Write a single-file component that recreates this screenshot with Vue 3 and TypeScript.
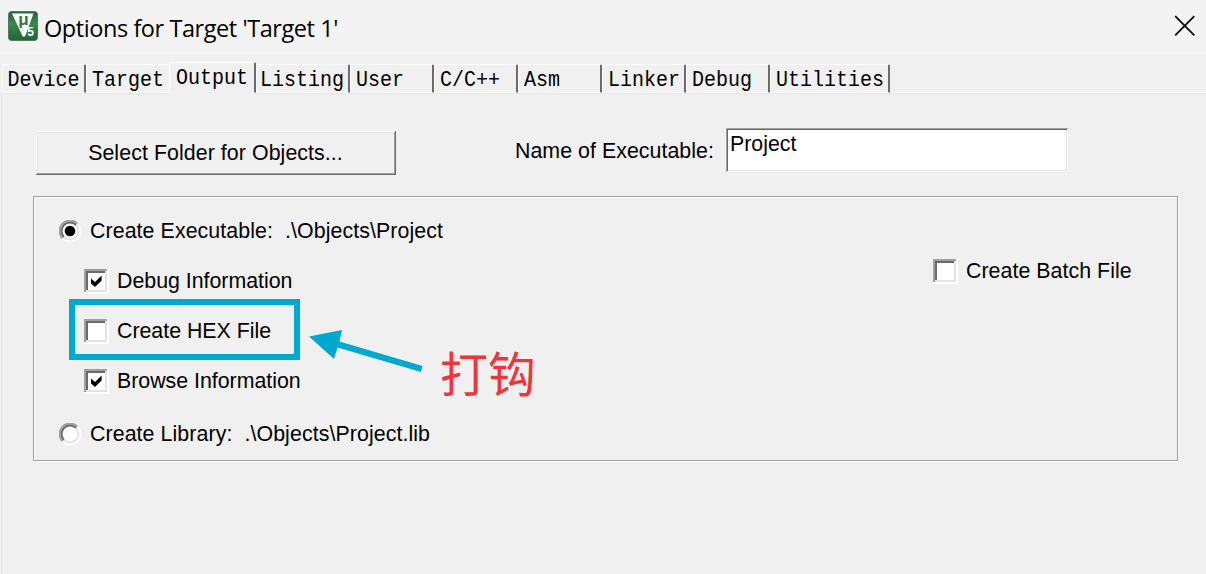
<script setup lang="ts">
import { ref } from 'vue'

interface Tab {
  label: string
  width: number
  pad: number
}

const tabs: Tab[] = [
  { label: 'Device', width: 84, pad: 5 },
  { label: 'Target', width: 83, pad: 5 },
  { label: 'Output', width: 87, pad: 6 },
  { label: 'Listing', width: 94, pad: 3 },
  { label: 'User', width: 84, pad: 5 },
  { label: 'C/C++', width: 84, pad: 5 },
  { label: 'Asm', width: 84, pad: 5 },
  { label: 'Linker', width: 84, pad: 5 },
  { label: 'Debug', width: 84, pad: 5 },
  { label: 'Utilities', width: 120, pad: 5 },
]
const active = ref('Output')
const mode = ref<'exe' | 'lib'>('exe')
const options = ref([
  { label: 'Debug Information', checked: true, marked: false },
  { label: 'Create HEX File', checked: false, marked: true },
  { label: 'Browse Information', checked: true, marked: false },
])
</script>

<template>
  <div class="dialog">
    <header class="titlebar">
      <svg class="logo" width="30" height="30" viewBox="0 0 30 30">
        <defs>
          <linearGradient id="logo-fill" x1="0" y1="0" x2="0" y2="1">
            <stop offset="0" stop-color="#286437" />
            <stop offset=".45" stop-color="#38894a" />
            <stop offset="1" stop-color="#246036" />
          </linearGradient>
        </defs>
        <rect x=".5" y=".5" width="29" height="29" rx="3" fill="url(#logo-fill)" stroke="#4f7b5a" />
        <path d="M4 2.5H25.5L17 25.5H14.8Z" fill="#fff" />
        <text x="10.2" y="13.5" class="mu">μ</text>
        <text x="19.2" y="25.3" class="five">5</text>
      </svg>
      <h1 class="title">Options for Target 'Target 1'</h1>
      <svg class="close" width="22" height="22" viewBox="0 0 22 22">
        <path d="M1.2 1.2L20.3 20.3M20.3 1.2L1.2 20.3" stroke="#111" stroke-width="1.9" />
      </svg>
    </header>

    <nav class="tabs">
      <div
        v-for="t in tabs"
        :key="t.label"
        class="tab"
        :class="{ active: t.label === active }"
        :style="{ width: t.width + 'px', paddingLeft: t.pad + 'px' }"
        @click="active = t.label"
      >
        <span>{{ t.label }}</span>
      </div>
      <div class="rest"></div>
    </nav>

    <main class="page">
      <div class="top">
        <button class="folder">Select Folder for Objects...</button>
        <span class="name-label">Name of Executable:</span>
        <div class="field">Project</div>
      </div>

      <section class="group">
        <div class="left">
          <div class="row radio-row" @click="mode = 'exe'">
            <svg class="radio" width="22" height="22" viewBox="0 0 22 22">
              <circle cx="11" cy="11" r="9.5" fill="#fff" />
              <path d="M3.6 18.4A10 10 0 0 1 18.4 3.6" class="r1" />
              <path d="M18.4 3.6A10 10 0 0 1 3.6 18.4" class="r2" />
              <path d="M5 17A8.2 8.2 0 0 1 17 5" class="r3" />
              <path d="M17 5A8.2 8.2 0 0 1 5 17" class="r4" />
              <circle v-if="mode === 'exe'" cx="11" cy="11" r="5.3" fill="#000" />
            </svg>
            <span>Create Executable:&nbsp; .\Objects\Project</span>
          </div>
          <div v-for="o in options" :key="o.label" class="row check-row" :class="{ marked: o.marked }" @click="o.checked = !o.checked">
            <i class="box">
              <svg v-if="o.checked" width="13" height="13" viewBox="0 0 13 13">
                <path d="M1 3.6L5 7L11.6 .6V5.4L5 12L1 8.4Z" fill="#000" />
              </svg>
            </i>
            <span>{{ o.label }}</span>
          </div>
          <div class="row radio-row library" @click="mode = 'lib'">
            <svg class="radio" width="22" height="22" viewBox="0 0 22 22">
              <circle cx="11" cy="11" r="9.5" fill="#fff" />
              <path d="M3.6 18.4A10 10 0 0 1 18.4 3.6" class="r1" />
              <path d="M18.4 3.6A10 10 0 0 1 3.6 18.4" class="r2" />
              <path d="M5 17A8.2 8.2 0 0 1 17 5" class="r3" />
              <path d="M17 5A8.2 8.2 0 0 1 5 17" class="r4" />
              <circle v-if="mode === 'lib'" cx="11" cy="11" r="5.3" fill="#000" />
            </svg>
            <span>Create Library:&nbsp; .\Objects\Project.lib</span>
          </div>
        </div>
        <div class="row batch">
          <i class="box"></i>
          <span>Create Batch File</span>
        </div>
      </section>
    </main>

    <svg class="arrow" width="116" height="46" viewBox="0 0 116 46">
      <path d="M1 8.5L34 2L31.5 13.5L114.5 38L113 44L29.5 19.5L26 31Z" fill="#00aacf" />
    </svg>
    <div class="note">打钩</div>
  </div>
</template>

<style>
body {
  margin: 0;
  background: #f0f0f0;
}
</style>

<style scoped>
.dialog {
  position: relative;
  width: 1206px;
  height: 574px;
  overflow: hidden;
  box-sizing: border-box;
  background: #f0f0f0;
  color: #000;
  font-family: 'Liberation Sans', Arial, sans-serif;
  font-size: 21.33px;
  line-height: 26px;
}
.titlebar {
  display: flex;
  height: 55px;
  background: #f3f3f3;
  box-sizing: border-box;
  padding: 11px 10px 0 8px;
}
.logo {
  flex: none;
}
.mu {
  font: bold 17px 'Liberation Sans', sans-serif;
  fill: #31783f;
}
.five {
  font: bold 12px 'Liberation Sans', sans-serif;
  fill: #fff;
}
.title {
  flex: 1;
  margin: 0 0 0 6px;
  font: 400 23.5px/34px 'Open Sans', 'Noto Sans', sans-serif;
  letter-spacing: -0.43px;
  white-space: nowrap;
}
.close {
  flex: none;
  margin-top: 4px;
}
.tabs {
  display: flex;
  align-items: flex-end;
  height: 38px;
  padding-left: 2px;
}
.tab {
  flex: none;
  box-sizing: border-box;
  height: 29px;
  border: 1px solid #fff;
  border-right: 2px solid #6b6b6b;
  border-bottom: 1px solid #fff;
  border-radius: 2px 2px 0 0;
  font: 20px/30px 'Liberation Mono', monospace;
  white-space: pre;
}
.tab:not(.active),
.rest {
  box-shadow: 0 1px #e3e3e3;
}
.tab span {
  display: inline-block;
  transform: scaleY(1.14);
}
.tab:first-child span {
  margin-left: -0.5px;
}
.tab:nth-child(2) {
  border-right: 0;
}
.tab.active {
  height: 31px;
  border-bottom-color: #f0f0f0;
  line-height: 29px;
}
.rest {
  flex: 1;
  height: 1px;
  background: #fff;
}
.page {
  height: 481px;
  box-sizing: border-box;
  margin-left: 1px;
  padding: 35px 28px 0 31px;
  border-left: 1px solid #e3e3e3;
}
.top {
  display: flex;
  height: 45px;
  padding-left: 3px;
}
.folder {
  width: 360px;
  height: 44px;
  margin-top: 3px;
  padding: 0 1px 0 0;
  border: 0;
  background: #f0f0f0;
  box-shadow: inset -1px -1px #696969, inset 1px 1px #fff, inset -2px -2px #a0a0a0, inset 2px 2px #e3e3e3;
  font: inherit;
  line-height: 44px;
  letter-spacing: 0.08px;
  color: #000;
}
.name-label {
  width: 211px;
  margin: 10px 0 0 119px;
  letter-spacing: 0.05px;
  white-space: nowrap;
}
.field {
  width: 342px;
  height: 44px;
  box-sizing: border-box;
  padding: 3px 0 0 4px;
  background: #fff;
  box-shadow: inset 1px 1px #a0a0a0, inset -1px -1px #fff, inset 2px 2px #696969, inset -2px -2px #e3e3e3;
}
.group {
  display: flex;
  justify-content: space-between;
  height: 265px;
  margin-top: 23px;
  box-sizing: border-box;
  border: 1px solid #a0a0a0;
  box-shadow: inset 1px 1px #fff, 1px 1px #fff;
}
.row {
  display: flex;
  align-items: center;
  height: 50px;
  white-space: nowrap;
}
.left {
  padding-top: 9px;
}
.radio-row {
  padding-left: 25px;
}
.radio-row span {
  margin-left: 9px;
  letter-spacing: 0.09px;
}
.radio {
  flex: none;
}
.radio path {
  fill: none;
  stroke-width: 1.9;
}
.radio .r1 {
  stroke: #a0a0a0;
}
.radio .r2 {
  stroke: #fff;
}
.radio .r3 {
  stroke: #696969;
}
.radio .r4 {
  stroke: #e3e3e3;
}
.check-row {
  margin-left: 50px;
}
.box {
  display: flex;
  flex: none;
  align-items: center;
  justify-content: center;
  width: 25px;
  height: 25px;
  margin-right: 8px;
  background: #fff;
  box-shadow: inset -2px -2px #fff, inset 2px 2px #a0a0a0, inset -4px -4px #e3e3e3, inset 4px 4px #696969;
}
.marked {
  position: relative;
}
.marked::before {
  content: '';
  position: absolute;
  left: -15px;
  top: -7px;
  width: 219px;
  height: 49px;
  border: 6px solid #00aacf;
}
.library {
  margin-top: 3px;
}
.batch {
  width: 244px;
  margin-top: 49px;
  letter-spacing: 0.05px;
}
.arrow {
  position: absolute;
  left: 308px;
  top: 328px;
}
.note {
  position: absolute;
  left: 440px;
  top: 336px;
  font: 48px/70px 'Noto Sans CJK SC', sans-serif;
  color: #f2333a;
}
</style>
